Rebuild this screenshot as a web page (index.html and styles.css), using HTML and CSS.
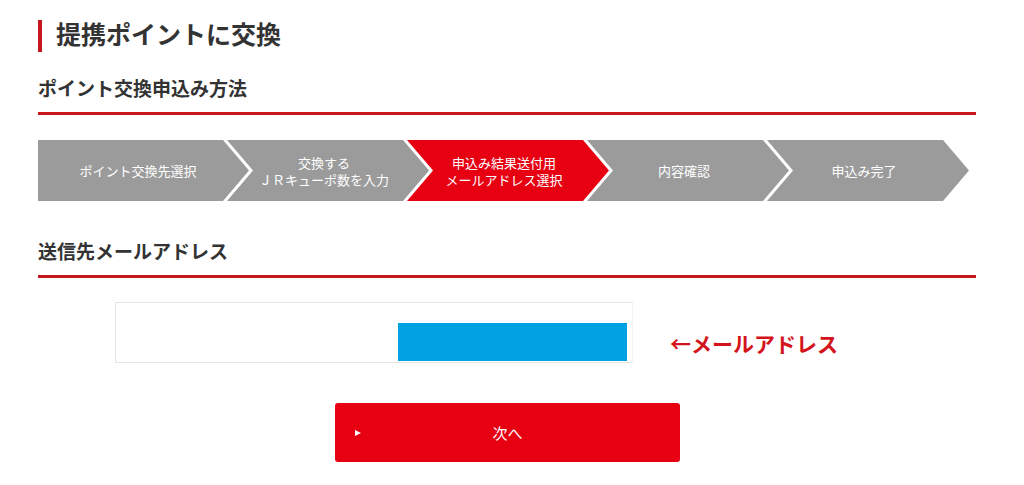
FILE: index.html
```html
<!DOCTYPE html>
<html lang="ja">
<head>
<meta charset="utf-8">
<title>提携ポイントに交換</title>
<link rel="stylesheet" href="styles.css">
</head>
<body>
<main class="page">
  <h1 class="page-title">提携ポイントに交換</h1>

  <h2 class="section-title section-title--method">ポイント交換申込み方法</h2>

  <ol class="steps">
    <li class="step step--first">ポイント交換先選択</li>
    <li class="step">交換する<br>ＪＲキューポ数を入力</li>
    <li class="step step--active">申込み結果送付用<br>メールアドレス選択</li>
    <li class="step">内容確認</li>
    <li class="step">申込み完了</li>
  </ol>

  <h2 class="section-title section-title--mail">送信先メールアドレス</h2>

  <div class="mail-row">
    <div class="mail-box">
      <div class="mail-redact"></div>
    </div>
    <p class="mail-note">←メールアドレス</p>
  </div>

  <button class="next-btn" type="button">
    <span class="next-btn__icon"></span>
    <span class="next-btn__label">次へ</span>
    <span></span>
  </button>
</main>
</body>
</html>
```

FILE: styles.css
```css
* {
  box-sizing: border-box;
}

html, body {
  margin: 0;
  padding: 0;
  background: #ffffff;
}

body {
  font-family: "Noto Sans CJK JP", "Noto Sans", sans-serif;
  color: #333333;
}

.page {
  width: 976px;
  padding: 20px 0 0 38px;
}

.page-title {
  margin: 0;
  font-size: 25px;
  font-weight: 700;
  line-height: 26px;
  padding: 0 0 6px 14px;
  border-left: 4px solid #c8161e;
  color: #333333;
}

.section-title {
  margin: 0;
  font-size: 19px;
  font-weight: 700;
  line-height: 26px;
  padding-bottom: 11px;
  border-bottom: 3px solid #c8161e;
  color: #333333;
}

.section-title--method {
  margin-top: 23px;
}

.section-title--mail {
  margin-top: 37px;
}

/* Steps */
.steps {
  list-style: none;
  margin: 25px 0 0 0;
  padding: 0;
  display: flex;
  height: 61px;
}

.step {
  flex: 0 0 202px;
  height: 61px;
  margin-left: -22px;
  padding: 0 28px 0 20px;
  display: flex;
  align-items: center;
  justify-content: center;
  text-align: center;
  white-space: nowrap;
  background: #9b9b9b;
  color: #ffffff;
  font-size: 13px;
  line-height: 17px;
  clip-path: polygon(0 0, calc(100% - 26px) 0, 100% 50%, calc(100% - 26px) 100%, 0 100%, 26px 50%);
}

.step--first {
  flex-basis: 211px;
  margin-left: 0;
  padding: 0 37px 0 26px;
  clip-path: polygon(0 0, calc(100% - 26px) 0, 100% 50%, calc(100% - 26px) 100%, 0 100%);
}

.step--active {
  background: #e60012;
}

/* Mail row */
.mail-row {
  margin-top: 24px;
  margin-left: 77px;
  display: flex;
  align-items: center;
}

.mail-box {
  width: 518px;
  height: 61px;
  border: 1px solid #e4e4e4;
  border-right-color: #f6f6f6;
  display: flex;
  justify-content: flex-end;
  align-items: flex-end;
  padding: 0 5px 1px 0;
}

.mail-redact {
  width: 229px;
  height: 38px;
  background: #00a2e3;
}

.mail-note {
  margin: 20px 0 0 37px;
  font-size: 21px;
  font-weight: 700;
  line-height: 28px;
  color: #d3141c;
}

/* Button */
.next-btn {
  display: grid;
  grid-template-columns: 1fr auto 1fr;
  align-items: center;
  margin: 40px 0 0 297px;
  width: 345px;
  height: 59px;
  padding: 0;
  border: none;
  border-radius: 3px;
  background: #e60012;
  color: #ffffff;
  font-family: "Noto Sans CJK JP", "Noto Sans", sans-serif;
  font-size: 15px;
  line-height: 20px;
  cursor: pointer;
}

.next-btn__icon {
  justify-self: start;
  margin-left: 20px;
  width: 0;
  height: 0;
  border-top: 3.5px solid transparent;
  border-bottom: 3.5px solid transparent;
  border-left: 6px solid #ffffff;
}

.next-btn__label {
  display: block;
}
```
